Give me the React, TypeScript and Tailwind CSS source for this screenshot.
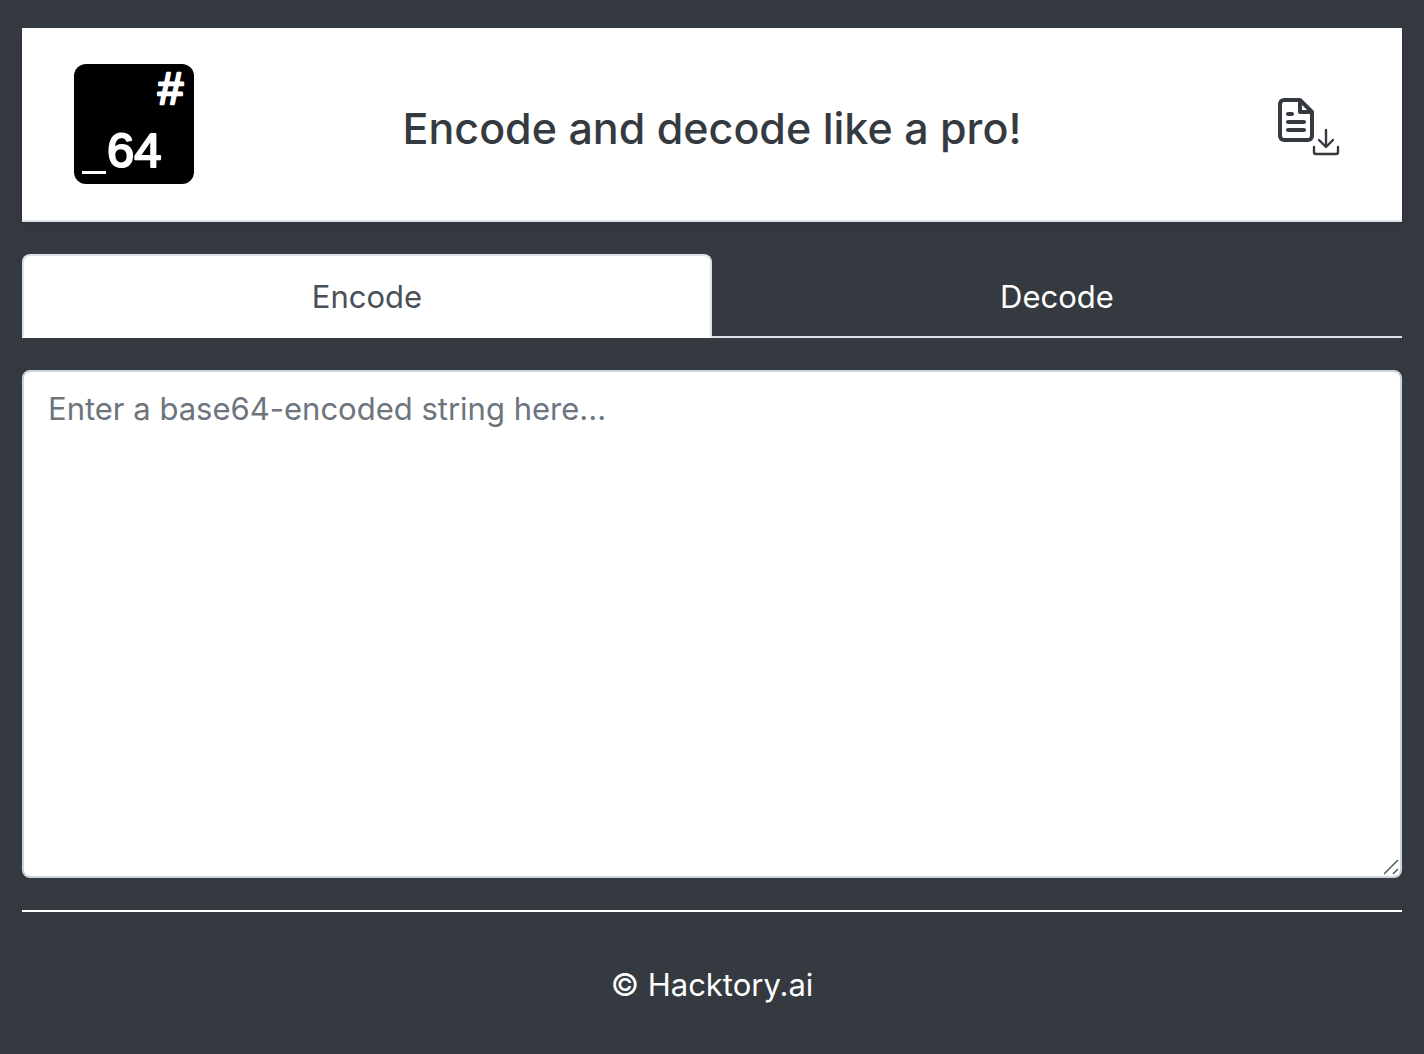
import { useState } from "react";

function Logo() {
  return (
    <svg viewBox="0 0 120 120" className="size-[120px] shrink-0" role="img" aria-label="Base64">
      <rect width="120" height="120" rx="12" fill="#000" />
      <g
        fill="#fff"
        stroke="#fff"
        strokeLinejoin="round"
        fontWeight="400"
        fontFamily="'Liberation Sans', Arial, sans-serif"
      >
        <text x="84" y="40" fontSize="45" strokeWidth="2.500">#</text>
        <text x="33" y="103" fontSize="49" strokeWidth="2">64</text>
      </g>
      <rect x="8" y="107" width="24" height="3" fill="#fff" />
    </svg>
  );
}

function DownloadFileIcon() {
  return (
    <svg
      viewBox="0 0 64 60"
      className="h-[60px] w-16"
      fill="none"
      stroke="#343a40"
      strokeLinecap="round"
      strokeLinejoin="round"
      aria-hidden="true"
    >
      <g strokeWidth="4">
        <path d="M24 4H8a4 4 0 0 0-4 4v32a4 4 0 0 0 4 4h24a4 4 0 0 0 4-4V16L24 4v12h12" />
        <path d="M12 18h4M12 26h16M12 34h16" />
      </g>
      <g strokeWidth="2.4">
        <path d="M38 51v5a2 2 0 0 0 2 2h20a2 2 0 0 0 2-2v-5" />
        <path d="M50 34v16M43 44l7 7 7-7" />
      </g>
    </svg>
  );
}

const modes = ["Encode", "Decode"];

export default function App() {
  const [active, setActive] = useState("Encode");
  const [text, setText] = useState("");

  return (
    <div className="min-h-screen bg-[#343a40] px-[22px] pt-7 font-['Inter',sans-serif] text-[31px] leading-[48px] text-white">
      <header className="flex items-center justify-between border-b-2 border-[#dee2e6] bg-white px-[52px] py-9 shadow-[0_4px_8px_rgba(0,0,0,0.075)]">
        <Logo />
        <h1 className="pt-2 text-center text-[43px] leading-[58px] font-medium text-[#343a40]">
          Encode and decode like a pro!
        </h1>
        <div className="flex w-[120px] justify-end pt-1 pr-2.5">
          <button type="button" aria-label="Download file">
            <DownloadFileIcon />
          </button>
        </div>
      </header>

      <main>
        <div role="tablist" className="mt-8 grid grid-cols-2 border-b-2 border-[#dee2e6]">
          {modes.map((mode) => (
            <button
              key={mode}
              type="button"
              role="tab"
              aria-selected={active === mode}
              onClick={() => setActive(mode)}
              className={
                active === mode
                  ? "-mb-0.5 rounded-t-lg border-2 border-[#dee2e6] border-b-white bg-white pt-[17px] pb-[15px] text-[#495057]"
                  : "-mb-0.5 border-2 border-transparent pt-[17px] pb-[15px] text-white"
              }
            >
              {mode}
            </button>
          ))}
        </div>

        <div className="relative mt-8">
          <textarea
            aria-label="Text to convert"
            placeholder="Enter a base64-encoded string here..."
            value={text}
            onChange={(event) => setText(event.target.value)}
            rows={10}
            className="block w-full resize-none rounded-lg border-2 border-[#ced4da] bg-white px-6 pt-[13px] pb-[11px] text-[#495057] outline-none placeholder:text-[#6c757d]"
          />
          <svg
            viewBox="0 0 16 16"
            className="pointer-events-none absolute right-0.5 bottom-0.5 size-4"
            fill="none"
            stroke="#54575b"
            strokeWidth="1.5"
            aria-hidden="true"
          >
            <path d="M0 14 14 0M9 14l5-5" />
          </svg>
        </div>
      </main>

      <footer className="mt-8 border-t-2 border-white pt-[49px] pb-[43px] text-center">
        © Hacktory.ai
      </footer>
    </div>
  );
}
